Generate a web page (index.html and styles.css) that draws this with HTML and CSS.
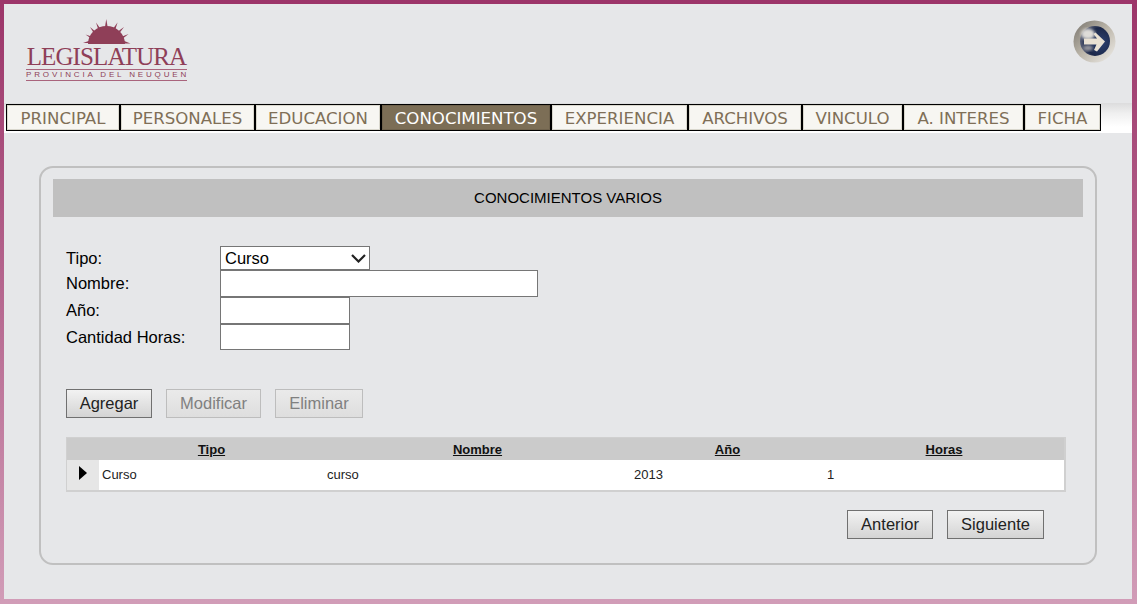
FILE: index.html
```html
<!DOCTYPE html>
<html lang="es">
<head>
<meta charset="utf-8">
<title>Conocimientos</title>
<link rel="stylesheet" href="styles.css">
</head>
<body>
<div class="page">
  <header class="header">
    <div class="logo">
      <svg class="logo-sun" width="48" height="25" viewBox="0 0 48 25" aria-hidden="true">
        <g fill="#8f3f58">
          <path d="M5 25a18.500 18 0 0 1 37 0z"/>
          <path d="M23.300 0l1.500 9h-3z"/>
          <path d="M13 3.500l5 7-2.500 1z"/>
          <path d="M34.500 3.500l-2.500 8-2.500-1z"/>
          <path d="M7 8l6.500 5.500-2 1.800z"/>
          <path d="M41 8l-5.500 7.300-2-1.800z"/>
          <path d="M2.500 15.500l7.500 2.500-1.200 2z"/>
          <path d="M45.500 15l-6.300 5-1.200-2z"/>
          <path d="M0 24l7-2.500v2.500z"/>
          <path d="M47.500 24.500l-7.500-3v3z"/>
        </g>
      </svg>
      <div class="logo-name">LEGISLATURA</div>
      <div class="logo-sub">PROVINCIA DEL NEUQUEN</div>
    </div>
    <a class="exit" href="#" aria-label="Salir">
      <svg width="43" height="43" viewBox="0 0 43 43" aria-hidden="true">
        <defs>
          <linearGradient id="ring" x1="0" y1="0" x2="1" y2="1">
            <stop offset="0" stop-color="#77736c"/>
            <stop offset=".5" stop-color="#bdb7ab"/>
            <stop offset="1" stop-color="#f1efeb"/>
          </linearGradient>
          <radialGradient id="core" cx=".7" cy=".55" r=".7">
            <stop offset="0" stop-color="#2c4070"/>
            <stop offset=".7" stop-color="#1c2849"/>
            <stop offset="1" stop-color="#5d6379"/>
          </radialGradient>
          <filter id="soft"><feGaussianBlur stdDeviation="1.8"/></filter>
          <filter id="tiny"><feGaussianBlur stdDeviation=".4"/></filter>
        </defs>
        <circle cx="21.500" cy="21.500" r="21" fill="url(#ring)"/>
        <circle cx="22" cy="21" r="15" fill="url(#core)"/>
        <ellipse cx="15" cy="14" rx="7" ry="5.500" fill="#dedcd8" filter="url(#soft)"/>
        <ellipse cx="15" cy="28" rx="5" ry="3" fill="#94949c" filter="url(#soft)"/>
        <path fill="#e9e1d3" filter="url(#tiny)" d="M22.500 12.500l9.500 9-8 10-3-1.500 2.500-5.500H11v-6h13l-3.500-4.500z"/>
      </svg>
    </a>
  </header>

  <nav class="tabs">
    <a class="tab" href="#">PRINCIPAL</a>
    <a class="tab" href="#">PERSONALES</a>
    <a class="tab" href="#">EDUCACION</a>
    <a class="tab tab-active" href="#">CONOCIMIENTOS</a>
    <a class="tab" href="#">EXPERIENCIA</a>
    <a class="tab" href="#">ARCHIVOS</a>
    <a class="tab" href="#">VINCULO</a>
    <a class="tab" href="#">A. INTERES</a>
    <a class="tab" href="#">FICHA</a>
  </nav>

  <main class="panel">
    <h1 class="panel-title">CONOCIMIENTOS VARIOS</h1>

    <form class="form">
      <label class="form-label" for="tipo">Tipo:</label>
      <select class="select" id="tipo"><option>Curso</option></select>
      <label class="form-label" for="nombre">Nombre:</label>
      <input class="input input-wide" id="nombre" type="text">
      <label class="form-label" for="anio">Año:</label>
      <input class="input input-short" id="anio" type="text">
      <label class="form-label" for="horas">Cantidad Horas:</label>
      <input class="input input-short input-last" id="horas" type="text">
    </form>

    <div class="actions">
      <button class="btn btn-agregar" type="button">Agregar</button>
      <button class="btn btn-modificar" type="button" disabled>Modificar</button>
      <button class="btn btn-eliminar" type="button" disabled>Eliminar</button>
    </div>

    <table class="grid">
      <colgroup>
        <col class="col-mark"><col class="col-tipo"><col class="col-nombre"><col class="col-anio"><col class="col-horas">
      </colgroup>
      <thead>
        <tr><th></th><th>Tipo</th><th>Nombre</th><th>Año</th><th>Horas</th></tr>
      </thead>
      <tbody>
        <tr>
          <td class="mark"><span class="arrow"></span></td>
          <td>Curso</td><td>curso</td><td>2013</td><td>1</td>
        </tr>
      </tbody>
    </table>

    <div class="pager">
      <button class="btn btn-anterior" type="button">Anterior</button>
      <button class="btn btn-siguiente" type="button">Siguiente</button>
    </div>
  </main>
</div>
</body>
</html>
```

FILE: styles.css
```css
* { box-sizing: border-box; }
html, body { margin: 0; padding: 0; }
body { width: 1137px; height: 604px; overflow: hidden; font-family: "Liberation Sans", Arial, sans-serif; }

.page {
  width: 1137px;
  height: 604px;
  background: #e6e7e9;
  border: 4px solid;
  border-image: linear-gradient(#9c3569, #d19cb7) 1;
  border-right-width: 5px;
  border-bottom-width: 5px;
}

.header {
  height: 99px;
  display: flex;
  justify-content: space-between;
  align-items: flex-start;
  padding: 15px 16px 0 22px;
}

.logo { width: 161px; color: #8f3f58; display: flex; flex-direction: column; align-items: center; }
.logo-sun { display: block; }
.logo-name {
  font-family: "Liberation Serif", serif;
  font-size: 25px;
  line-height: 22px;
  letter-spacing: -0.9px;
  margin-top: 2px;
  white-space: nowrap;
}
.logo-sub {
  width: 161px;
  margin-top: 1px;
  border-top: 1px solid #a9647c;
  border-bottom: 1px solid #a9647c;
  font-size: 8px;
  line-height: 10px;
  letter-spacing: 2.85px;
  white-space: nowrap;
  text-align: center;
}
.exit { display: block; margin-top: 1px; height: 43px; }

.tabs {
  height: 30px;
  display: grid;
  grid-template-columns: 114px 135px 126px 170px 137px 114px 101px 121px 77px;
  justify-content: start;
  padding: 1px 0 2px 2px;
  background: linear-gradient(#dcdcdd, #f0f0f0 35%, #fff 80%);
}
.tab {
  display: block;
  height: 27px;
  padding-top: 1px;
  border: 1px solid #000;
  box-shadow: inset 0 0 0 1px #d9d7cd;
  background: #f7f6f2;
  color: #7f6f57;
  font-family: "DejaVu Sans", Verdana, sans-serif;
  font-size: 16.600px;
  line-height: 25px;
  text-align: center;
  text-decoration: none;
  white-space: nowrap;
}
.tab-active { background: #7c6e56; color: #fff; box-shadow: inset 0 0 0 1px #6f624c; }

.panel {
  width: 1058px;
  height: 399px;
  margin: 33px 0 0 35px;
  padding: 11px 12px;
  border: 2px solid #c0c0c0;
  border-radius: 14px;
}
.panel-title {
  margin: 0;
  height: 38px;
  background: #c0c0c0;
  font-size: 15px;
  font-weight: 400;
  line-height: 38px;
  text-align: center;
  color: #000;
}

.form {
  display: grid;
  grid-template-columns: 154px 1fr;
  grid-template-rows: 24px 27px 27px 26px;
  align-items: center;
  margin: 29px 0 0 13px;
  font-size: 16.500px;
}
.form-label { color: #000; }
.select {
  width: 150px;
  height: 24px;
  font: 16.500px "Liberation Sans", Arial, sans-serif;
  color: #000;
  appearance: none;
  background: #fff url("data:image/svg+xml,%3Csvg xmlns='http://www.w3.org/2000/svg' width='15' height='9' viewBox='0 0 15 9'%3E%3Cpath d='M1 1l6.500 6.500L14 1' fill='none' stroke='%23222' stroke-width='2.200'/%3E%3C/svg%3E") no-repeat 130px 7px;
  border: 1px solid #767676;
  border-radius: 0;
  padding: 0 0 0 4px;
}
.input {
  display: block;
  background: #fff;
  border: 1px solid #767676;
  border-radius: 0;
  padding: 0 2px;
  height: 27px;
}
.input-wide { width: 318px; }
.input-short { width: 130px; }
.input-last { height: 26px; }

.actions { display: flex; gap: 14px; margin: 39px 0 0 13px; }
.btn {
  height: 29px;
  padding: 0;
  font: 16.500px "Liberation Sans", Arial, sans-serif;
  color: #222;
  background: linear-gradient(#f2f2f2, #d4d4d4);
  border: 1px solid #707070;
  border-radius: 0;
}
.btn:disabled { color: #808080; background: linear-gradient(#eaeaea, #dedede); border-color: #bdbdbd; }
.btn-agregar { width: 86px; }
.btn-modificar { width: 95px; }
.btn-eliminar { width: 88px; }
.btn-anterior { width: 86px; }
.btn-siguiente { width: 97px; }

.grid {
  width: 1000px;
  margin: 19px 0 0 13px;
  border-collapse: separate;
  border-spacing: 0;
  table-layout: fixed;
  border: 1px solid #d0d0d0;
  border-right-width: 2px;
  border-bottom-width: 2px;
  font-size: 13px;
  background: #fff;
}
.col-mark { width: 32px; }
.col-tipo { width: 225px; }
.col-nombre { width: 307px; }
.col-anio { width: 193px; }
.grid th {
  height: 22px;
  padding: 0;
  background: #cbcbcb;
  font-size: 13px;
  font-weight: 700;
  text-decoration: underline;
  text-align: center;
  color: #111;
}
.grid td { height: 30px; padding: 0 3px 2px; color: #222; }
.grid .mark { background: #e6e6e6; padding: 0 0 0 12px; }
.arrow {
  display: block;
  width: 0;
  height: 0;
  border-top: 7px solid transparent;
  border-bottom: 7px solid transparent;
  border-left: 8px solid #000;
  margin-bottom: 4px;
}

.pager { display: flex; gap: 14px; justify-content: flex-end; margin: 18px 39px 0 0; }
```
